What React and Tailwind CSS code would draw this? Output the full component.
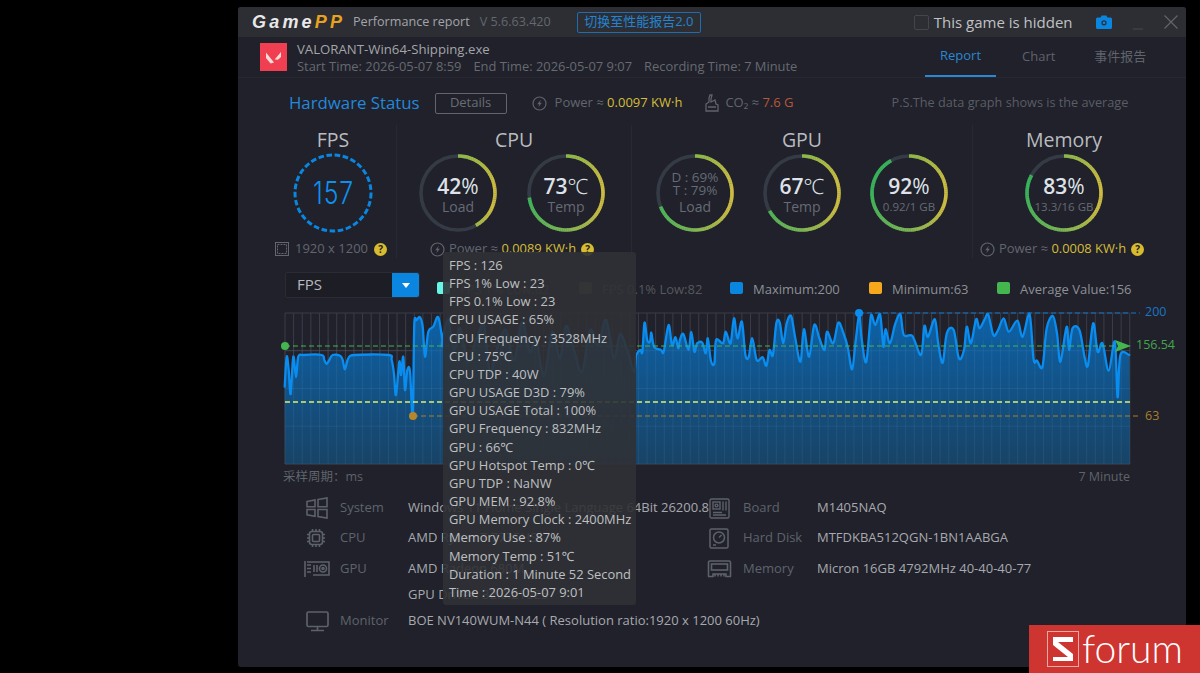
import { Minus } from "lucide-react";

const leftRaw = [
  [44, 380], [50, 290], [56, 330], [62, 402], [70, 290], [78, 352], [85, 290], [100, 285], [155, 285], [163, 300], [170, 312], [178, 300],
  [188, 285], [210, 287], [218, 300], [225, 328], [235, 295], [255, 285], [355, 285], [365, 300], [372, 342], [378, 405], [388, 305],
  [393, 345], [400, 290], [405, 390], [412, 330], [420, 335], [428, 465], [433, 190], [440, 180], [450, 172], [458, 200], [465, 290], [475, 215],
  [490, 200], [505, 172], [518, 250],
];

const midRaw = [
  [442, 343], [448, 320], [454, 350], [460, 328], [468, 362], [476, 340], [484, 325], [490, 372], [498, 345], [506, 330], [514, 360], [522, 322],
  [530, 352], [536, 338], [544, 376], [552, 332], [560, 358], [566, 326], [574, 350], [582, 372], [590, 330], [598, 345], [606, 320], [614, 358],
  [620, 334], [628, 352], [634, 372],
];

const rightRaw = [
  [18, 165], [30, 150], [36, 155], [42, 68], [50, 120], [58, 125], [62, 98], [70, 140], [90, 150], [98, 155], [112, 75], [122, 135], [132, 112],
  [140, 145], [145, 120], [155, 102], [170, 150], [178, 96], [187, 155], [195, 130], [210, 128], [220, 160], [226, 115], [235, 182], [245, 190],
  [250, 120], [270, 130], [278, 95], [292, 130], [302, 55], [312, 115], [325, 65], [335, 165], [345, 170], [355, 115], [368, 180], [385, 172],
  [396, 197], [405, 150], [415, 165], [425, 70], [435, 68], [445, 130], [455, 70], [468, 48], [480, 115], [495, 185], [505, 88], [520, 170],
  [535, 75], [550, 115], [565, 150], [572, 95], [590, 130], [605, 68], [620, 100], [632, 140], [645, 208], [655, 125], [666, 40], [672, 110], [686, 186],
  [700, 45], [712, 75], [726, 42], [736, 140], [742, 88], [755, 130], [770, 72], [785, 42], [795, 105], [820, 108], [845, 165], [855, 78], [865, 110],
  [885, 58], [895, 130], [908, 188], [920, 100], [940, 90], [955, 175], [970, 150], [978, 80], [990, 130], [1005, 58], [1015, 85], [1030, 58], [1040, 42],
  [1055, 105], [1068, 92], [1085, 55], [1100, 95], [1125, 62], [1140, 110], [1160, 40], [1172, 178], [1182, 182], [1198, 200], [1210, 85], [1228, 48],
  [1240, 100], [1250, 185], [1268, 80], [1275, 150], [1285, 85], [1305, 90], [1320, 170], [1330, 195], [1345, 70], [1358, 155], [1372, 130], [1390, 212],
  [1408, 125], [1416, 292], [1424, 165], [1450, 165],
];

const chartPoints = [
  ...leftRaw.map(([x, y]) => [270 + x / 3, 260 + y / 3]),
  ...midRaw,
  ...rightRaw.map(([x, y]) => [630 + x / 2.904, 300 + y / 3]),
];

// catmull-rom so the line has the same soft peaks as the chart lib's smooth mode
function smoothPath(pts) {
  let d = "";
  for (let i = 0; i < pts.length - 1; i++) {
    const p0 = pts[Math.max(i - 1, 0)];
    const p1 = pts[i];
    const p2 = pts[i + 1];
    const p3 = pts[Math.min(i + 2, pts.length - 1)];
    const c1x = p1[0] + (p2[0] - p0[0]) / 6;
    const c1y = Math.max(313, p1[1] + (p2[1] - p0[1]) / 6);
    const c2x = p2[0] - (p3[0] - p1[0]) / 6;
    const c2y = Math.max(313, p2[1] - (p3[1] - p1[1]) / 6);
    d += ` C${c1x.toFixed(1)} ${c1y.toFixed(1)} ${c2x.toFixed(1)} ${c2y.toFixed(1)} ${p2[0].toFixed(1)} ${p2[1].toFixed(1)}`;
  }
  return d;
}

const curve = smoothPath(chartPoints);
const linePath = `M${chartPoints[0][0].toFixed(1)} ${chartPoints[0][1].toFixed(1)}${curve}`;
const areaPath = `M285 464 L${chartPoints[0][0].toFixed(1)} ${chartPoints[0][1].toFixed(1)}${curve} L1130 464 Z`;
const gridX = Array.from({ length: 99 }, (_, i) => 285 + i * 8.62);
const gridY = [313, 350.7, 388.5, 426.2, 464];

const stops = [
  [0, [138, 184, 74]],
  [0.2, [204, 188, 64]],
  [0.32, [204, 188, 64]],
  [0.5, [124, 182, 84]],
  [0.75, [56, 180, 90]],
  [1, [56, 180, 90]],
];

function ringColor(t) {
  for (let i = 1; i < stops.length; i++) {
    if (t <= stops[i][0]) {
      const [a, ca] = stops[i - 1];
      const [b, cb] = stops[i];
      const k = (t - a) / (b - a);
      return `rgb(${ca.map((c, n) => Math.round(c + (cb[n] - c) * k)).join(",")})`;
    }
  }
  return "rgb(56,180,90)";
}

function Ring({ value, children }) {
  const segs = Math.round(value * 1.2);
  const point = (t) => {
    const a = t * 2 * Math.PI - Math.PI / 2;
    return [40 + 37 * Math.cos(a), 40 + 37 * Math.sin(a)];
  };
  return (
    <div className="grid h-[80px] w-[80px] place-items-center">
      <svg className="col-start-1 row-start-1" width="80" height="80" viewBox="0 0 80 80">
        <circle cx="40" cy="40" r="37" fill="none" stroke="#353b45" strokeWidth="3.6" />
        {Array.from({ length: segs }, (_, i) => {
          const t0 = (i / segs) * (value / 100);
          const t1 = ((i + 1.15) / segs) * (value / 100);
          const [x0, y0] = point(t0);
          const [x1, y1] = point(Math.min(t1, value / 100));
          return (
            <line
              key={i}
              x1={x0}
              y1={y0}
              x2={x1}
              y2={y1}
              stroke={ringColor(t0)}
              strokeWidth="3.6"
            />
          );
        })}
      </svg>
      <div className="col-start-1 row-start-1 flex flex-col items-center">{children}</div>
    </div>
  );
}

function BigValue({ num, unit }) {
  return (
    <div className="pt-[6px] text-[21px] leading-[22px] font-semibold text-[#dfe3e9]">
      {num}
      <span className={unit === "%" ? "font-normal" : "font-light"}>{unit}</span>
    </div>
  );
}

function Sub({ children, small }) {
  return <div className={`${small ? "text-[11.5px]" : "text-[14px]"} leading-[20px] text-[#666b75]`}>{children}</div>;
}

function Bolt({ className = "" }) {
  return (
    <svg className={className} width="15" height="15" viewBox="0 0 15 15" fill="none">
      <circle cx="7.5" cy="7.5" r="6.5" stroke="#5f636b" strokeWidth="1.2" />
      <path d="M9 3.6 5.2 8.2h2.2L6.2 11.4 9.9 6.8H7.7z" fill="#5f636b" />
    </svg>
  );
}

function Help() {
  return (
    <span className="flex h-[13px] w-[13px] items-center justify-center rounded-full bg-[#d8bc2e] text-[10px] leading-none font-bold text-[#20212a]">
      ?
    </span>
  );
}

function PowerLine({ value }) {
  return (
    <div className="flex h-[20px] items-center justify-center pr-[4px] text-[13px] whitespace-nowrap text-[#62666f]">
      <Bolt />
      <span className="ml-[4px]">Power ≈&nbsp;</span>
      <span className="text-[12.9px] font-medium text-[#d4bd39]">{value}</span>
      <span className="ml-[5px]">
        <Help />
      </span>
    </div>
  );
}

function SectionTitle({ children }) {
  return <div className="h-[28px] text-center text-[19.5px] leading-[30px] text-[#b9bbbf]">{children}</div>;
}

function LegendItem({ color, label, className, dim }) {
  return (
    <div className={`mt-[6px] flex items-center text-[13px] ${dim ? "text-[#55585f]" : "text-[#8d9096]"} ${className}`}>
      <span className={`h-[12px] w-[13px] rounded-[2px] ${color}`} />
      <span className="mt-[3px] ml-[10px] whitespace-nowrap">{label}</span>
    </div>
  );
}

const iconStroke = "#5d616a";

function WindowsIcon() {
  return (
    <svg width="22" height="22" viewBox="0 0 22 22" fill="none" stroke={iconStroke} strokeWidth="1.6">
      <path d="M1 4.5 9 3v6.8H1zM1 12.5h8v6.8l-8-1.4zM12 2.5l9-1.5v8.8h-9zM12 12.5h9V21l-9-1.5z" />
    </svg>
  );
}

function CpuIcon() {
  return (
    <svg width="20" height="20" viewBox="0 0 20 20" fill="none" stroke={iconStroke} strokeWidth="1.6">
      <rect x="3.5" y="3.5" width="13" height="13" rx="2.5" />
      <rect x="6.5" y="6.5" width="7" height="7" rx="1" />
      <path d="M6.5 1v2M10 1v2M13.5 1v2M6.5 17v2M10 17v2M13.5 17v2M1 6.5h2M1 10h2M1 13.5h2M17 6.5h2M17 10h2M17 13.5h2" />
    </svg>
  );
}

function GpuIcon() {
  return (
    <svg className="-ml-[2px]" width="26" height="18" viewBox="0 0 26 18" fill="none" stroke={iconStroke} strokeWidth="1.6">
      <path d="M3 2h22v13H9" />
      <path d="M1 1v16M3 5h4M3 8.5h4M3 12h4" />
      <circle cx="19" cy="8.5" r="3.5" />
      <circle cx="19" cy="8.5" r="1" />
      <path d="M10 5v7M13 5v7" />
    </svg>
  );
}

function MonitorIcon() {
  return (
    <svg width="23" height="21" viewBox="0 0 23 21" fill="none" stroke={iconStroke} strokeWidth="1.7">
      <rect x="1" y="1" width="21" height="14.5" rx="1.5" />
      <path d="M11.5 15.5V19M5 19.5h13" />
    </svg>
  );
}

function BoardIcon() {
  return (
    <svg width="21" height="21" viewBox="0 0 21 21" fill="none" stroke={iconStroke} strokeWidth="1.4">
      <rect x="1" y="1" width="19" height="19" rx="1.5" />
      <rect x="4" y="4" width="7" height="7" />
      <circle cx="7.5" cy="7.5" r="1.4" />
      <path d="M14 3.5v9M17 3.5v9M4 14.5h9M4 17h13" />
    </svg>
  );
}

function DiskIcon() {
  return (
    <svg width="20" height="21" viewBox="0 0 20 21" fill="none" stroke={iconStroke} strokeWidth="1.5">
      <rect x="1" y="1" width="18" height="19" rx="1.5" />
      <circle cx="10" cy="9.5" r="5.5" />
      <path d="M10 9.5l2.5-2.5M4 17h3" />
    </svg>
  );
}

function MemoryIcon() {
  return (
    <svg className="-ml-[2px]" width="25" height="18" viewBox="0 0 25 18" fill="none" stroke={iconStroke} strokeWidth="1.6">
      <path d="M1.5 16.5V2.5a1.5 1.5 0 0 1 1.5-1.5h19a1.5 1.5 0 0 1 1.5 1.5v14" />
      <rect x="4.5" y="4" width="16" height="6" />
      <path d="M1 16.5h5v-2.5h13v2.5h5M8 14v2.5M11 14v2.5M14 14v2.5M17 14v2.5" />
    </svg>
  );
}

function InfoRow({ icon, label, value, labelW = "w-[68px]", className = "" }) {
  return (
    <div className={`flex items-center text-[13px] whitespace-nowrap ${className}`}>
      <span className="flex w-[34px] shrink-0 justify-start">{icon}</span>
      <span className={`shrink-0 text-[#5f636c] ${labelW}`}>{label}</span>
      <span className="text-[#a7a9ae]">{value}</span>
    </div>
  );
}

const tooltipRows = [
  "FPS : 126",
  "FPS 1% Low : 23",
  "FPS 0.1% Low : 23",
  "CPU USAGE : 65%",
  "CPU Frequency : 3528MHz",
  "CPU : 75℃",
  "CPU TDP : 40W",
  "GPU USAGE D3D : 79%",
  "GPU USAGE Total : 100%",
  "GPU Frequency : 832MHz",
  "GPU : 66℃",
  "GPU Hotspot Temp : 0℃",
  "GPU TDP : NaNW",
  "GPU MEM : 92.8%",
  "GPU Memory Clock : 2400MHz",
  "Memory Use : 87%",
  "Memory Temp : 51℃",
  "Duration : 1 Minute 52 Second",
  "Time : 2026-05-07 9:01",
];

export default function App() {
  return (
    <div
      className="relative h-[673px] w-[1200px] overflow-hidden bg-black pt-[7px] pl-[238px]"
      style={{ fontFamily: '"Open Sans", "Noto Sans", "Noto Sans CJK SC", sans-serif' }}
    >
      <div className="h-[660px] w-[948px] rounded-[3px] bg-[#20212a]">
        {/* title bar */}
        <div className="flex h-[30px] items-center rounded-t-[3px] bg-[#2c2e34] pl-[14px]">
          <div
            className="w-[89px] text-[18px] font-bold tracking-[3.2px] whitespace-nowrap text-[#e8e8e8] italic"
            style={{ fontFamily: '"Liberation Sans", sans-serif' }}
          >
            Game<span className="text-[#e9a21f]">PP</span>
          </div>
          <span className="ml-[12px] text-[12.6px] text-[#a3a5a9]">Performance report</span>
          <span className="ml-[10px] text-[12.6px] text-[#64676d]">V 5.6.63.420</span>
          <div className="ml-[26px] flex h-[21px] w-[124px] items-center justify-center rounded-[2px] border border-[#1f6db0] text-[13px] text-[#2583cf]">
            切换至性能报告2.0
          </div>
          <span className="ml-[213px] h-[15px] w-[15px] rounded-[2px] border border-[#44464c]" />
          <span className="ml-[5px] text-[15px] text-[#c0c1c4]">This game is hidden</span>
          <svg className="ml-[23px]" width="16" height="14" viewBox="0 0 16 14">
            <path d="M1.5 2.5H4.6L5.6 0.6h4.8l1 1.9h3.1a1.5 1.5 0 0 1 1.5 1.5v8.4a1.5 1.5 0 0 1-1.5 1.5h-13A1.5 1.5 0 0 1 0 12.4V4a1.5 1.5 0 0 1 1.5-1.5z" fill="#0a86e0" />
            <circle cx="8" cy="7.8" r="2.6" fill="#2c2e34" />
            <circle cx="8" cy="7.8" r="1.4" fill="#0a86e0" />
          </svg>
          <Minus className="mt-[14px] ml-[18px] text-[#55585e]" size={16} strokeWidth={1} />
          <svg className="ml-[18px]" width="14" height="14" viewBox="0 0 14 14" stroke="#63666c" strokeWidth="1.1">
            <path d="M0.5 0.5 13.5 13.5M13.5 0.5 0.5 13.5" />
          </svg>
        </div>

        {/* game header + tabs */}
        <div className="flex h-[41px] items-stretch border-b border-[#26272f] pl-[22px]">
          <div className="mt-[6px] flex h-[28px] w-[27px] items-center justify-center bg-[#ef3f50]">
            <svg width="15" height="13" viewBox="0 0 15 13">
              <path d="M0 1.5 8 11.5 4.6 12.5 0 7z" fill="#f6dcd8" />
              <path d="M15 1 8.6 8.4l3.4.3L15 6z" fill="#f6dcd8" />
            </svg>
          </div>
          <div className="ml-[10px] flex w-[501px] shrink-0 flex-col pt-[3px]">
            <div className="text-[13.2px] leading-[18px] text-[#a3a5a9]">VALORANT-Win64-Shipping.exe</div>
            <div className="-mt-[1px] flex text-[12.9px] leading-[18px] whitespace-nowrap text-[#666a71]">
              <span>Start Time: 2026-05-07 8:59</span>
              <span className="ml-[12px]">End Time: 2026-05-07 9:07</span>
              <span className="ml-[12px]">Recording Time: 7 Minute</span>
            </div>
          </div>
          <div className="ml-[127px] flex h-full text-[13px]">
            <div className="flex w-[71px] items-center justify-center border-b-2 border-[#2b86d3] text-[#2b86d3]">Report</div>
            <div className="ml-[26px] flex items-center text-[#5f636b]">Chart</div>
            <div className="ml-[39px] flex items-center text-[#5f636b]">事件报告</div>
          </div>
        </div>

        {/* hardware status */}
        <div className="flex h-[47px] items-center pt-[3px] pl-[51px]">
          <span className="text-[16.8px] text-[#2389dc]">Hardware Status</span>
          <span className="ml-[15px] flex h-[21px] w-[72px] items-center justify-center rounded-[2px] border border-[#62656c] text-[13px] text-[#6a6d74]">
            Details
          </span>
          <Bolt className="ml-[25px]" />
          <span className="ml-[8px] text-[13px] text-[#62666f]">Power ≈&nbsp;</span>
          <span className="text-[13px] font-medium text-[#d4bd39]">0.0097 KW·h</span>
          <svg className="ml-[23px]" width="14" height="18" viewBox="0 0 14 18" fill="none" stroke="#5f636b" strokeWidth="1.3">
            <path d="M1 17V10l3-2V4l1-3h2L6 5v3l4-2 1 4 2 1v6zM3 13h8" />
          </svg>
          <span className="ml-[6px] text-[13px] text-[#62666f]">CO₂ ≈&nbsp;</span>
          <span className="text-[13px] font-medium text-[#b8583a]">7.6 G</span>
          <span className="ml-[98px] text-[12.7px] whitespace-nowrap text-[#5a5d65]">P.S.The data graph shows is the average</span>
        </div>

        {/* stat groups */}
        <div className="ml-[32px] flex h-[133px]">
          <div className="w-[126px]">
            <SectionTitle>FPS</SectionTitle>
            <div className="flex justify-center">
              <div className="grid h-[80px] w-[80px] place-items-center">
                <svg className="col-start-1 row-start-1" width="80" height="80" viewBox="0 0 80 80">
                  <circle cx="40" cy="40" r="38" fill="none" stroke="#0a86e0" strokeWidth="3" strokeDasharray="5.6 2.6" />
                </svg>
                <span
                  className="col-start-1 row-start-1 scale-x-[0.8] text-[31px] font-light tracking-[1px] text-[#0f8fee]"
                  style={{ fontFamily: '"Inter", sans-serif' }}
                >
                  157
                </span>
              </div>
            </div>
            <div className="mt-[6px] flex h-[20px] items-center justify-center pr-[4px] text-[13px] text-[#62666f]">
              <svg width="14" height="14" viewBox="0 0 14 14" fill="none" stroke="#62666f">
                <rect x="0.5" y="0.5" width="13" height="13" />
                <rect x="2.5" y="2.5" width="9" height="9" strokeDasharray="2 1" />
              </svg>
              <span className="mx-[6px]">1920 x 1200</span>
              <Help />
            </div>
          </div>

          <div className="w-[235px] border-l border-[#282932]">
            <SectionTitle>CPU</SectionTitle>
            <div className="flex gap-[28px] pl-[21px]">
              <Ring value={42}>
                <BigValue num="42" unit="%" />
                <Sub>Load</Sub>
              </Ring>
              <Ring value={73}>
                <BigValue num="73" unit="℃" />
                <Sub>Temp</Sub>
              </Ring>
            </div>
            <div className="mt-[6px]">
              <PowerLine value="0.0089 KW·h" />
            </div>
          </div>

          <div className="w-[341px] border-l border-[#282932]">
            <SectionTitle>GPU</SectionTitle>
            <div className="flex gap-[27px] pl-[23px]">
              <Ring value={69}>
                <div className="pt-[2px] text-[13.5px] leading-[13px] text-[#666b75]">D : 69%</div>
                <div className="text-[13.5px] leading-[13px] text-[#666b75]">T : 79%</div>
                <Sub>Load</Sub>
              </Ring>
              <Ring value={67}>
                <BigValue num="67" unit="℃" />
                <Sub>Temp</Sub>
              </Ring>
              <Ring value={92}>
                <BigValue num="92" unit="%" />
                <Sub small>0.92/1 GB</Sub>
              </Ring>
            </div>
          </div>

          <div className="w-[183px] border-l border-[#282932]">
            <SectionTitle>Memory</SectionTitle>
            <div className="flex justify-center">
              <Ring value={83}>
                <BigValue num="83" unit="%" />
                <Sub small>13.3/16 GB</Sub>
              </Ring>
            </div>
            <div className="mt-[6px]">
              <PowerLine value="0.0008 KW·h" />
            </div>
          </div>
        </div>

        {/* selector + legend */}
        <div className="mt-[14px] flex h-[26px] items-center pl-[47px]">
          <div className="flex h-[26px] w-[135px] items-stretch rounded-[2px] border border-[#2a2b33] bg-[#1d1e25]">
            <span className="flex-1 pl-[11px] text-[15px] leading-[23px] text-[#b7b9bc]">FPS</span>
            <span className="flex w-[27px] items-center justify-center rounded-r-[2px] bg-[#0a86e0]">
              <span className="h-0 w-0 border-x-[4px] border-t-[5px] border-x-transparent border-t-white" />
            </span>
          </div>
          <LegendItem className="ml-[17px] w-[142px]" color="bg-[#66f5e6]" label="FPS 1% Low:82" dim />
          <LegendItem className="w-[151px]" color="bg-[#54533a]" label="FPS 0.1% Low:82" dim />
          <LegendItem className="w-[139px]" color="bg-[#0a86e0]" label="Maximum:200" />
          <LegendItem className="w-[128px]" color="bg-[#f5a81c]" label="Minimum:63" />
          <LegendItem color="bg-[#45b550]" label="Average Value:156" />
        </div>

        {/* chart */}
        <svg className="mt-[7px] block" width="948" height="165" viewBox="238 305 948 165">
          <defs>
            <linearGradient id="area" x1="0" y1="0" x2="0" y2="1">
              <stop offset="0" stopColor="#0b67b2" />
              <stop offset="1" stopColor="#17466b" />
            </linearGradient>
          </defs>
          {gridX.map((x) => (
            <line key={x} x1={x} y1="313" x2={x} y2="464" stroke="#3a3d48" strokeWidth="1" />
          ))}
          {gridY.map((y) => (
            <line key={y} x1="285" y1={y} x2="1130" y2={y} stroke="#3a3d48" strokeWidth="1" />
          ))}
          <path d={areaPath} fill="url(#area)" fillOpacity="0.92" />
          {gridX.map((x) => (
            <line key={`o${x}`} x1={x} y1="340" x2={x} y2="464" stroke="#ffffff" strokeOpacity="0.05" strokeWidth="1" />
          ))}
          {gridY.slice(1).map((y) => (
            <line key={`h${y}`} x1="285" y1={y} x2="1130" y2={y} stroke="#ffffff" strokeOpacity="0.05" strokeWidth="1" />
          ))}
          <path d={linePath} fill="none" stroke="#0a8df0" strokeWidth="2.3" strokeLinejoin="round" strokeLinecap="round" />
          <line x1="285" y1="346" x2="1116" y2="346" stroke="#45b550" strokeWidth="1" strokeDasharray="5 3" />
          <line x1="285" y1="402" x2="1130" y2="402" stroke="#dff06a" strokeWidth="1.4" strokeDasharray="5 3" />
          <line x1="413" y1="416" x2="1140" y2="416" stroke="#a97f2c" strokeWidth="1" strokeDasharray="5 3" />
          <line x1="859" y1="313" x2="1140" y2="313" stroke="#0a78cf" strokeWidth="1" strokeDasharray="5 3" />
          <circle cx="285" cy="346" r="4" fill="#45b550" />
          <circle cx="413" cy="416" r="4" fill="#b5862b" />
          <circle cx="859" cy="313" r="4" fill="#0a8df0" />
          <path d="M1115 340 1131 346 1115 352 1118 346z" fill="#45b550" />
          <text x="1145" y="316" fontSize="12.5" fill="#1a76c4">200</text>
          <text x="1136" y="349" fontSize="12.5" fill="#45a450">156.54</text>
          <text x="1145" y="420" fontSize="12.5" fill="#a97f2c">63</text>
        </svg>

        <div className="flex h-[15px] w-[892px] items-center justify-between pl-[45px] text-[12.5px] text-[#5f636b]">
          <span>采样周期：ms</span>
          <span>7 Minute</span>
        </div>

        {/* system info */}
        <div className="mt-[12px] grid h-[140px] w-[948px] grid-cols-[403px_1fr] pl-[68px]">
          <div className="flex flex-col">
            <InfoRow className="h-[22px]" icon={<WindowsIcon />} label="System" value="Windows 11 Home Single Language 64Bit 26200.8" />
            <InfoRow className="mt-[8px] h-[22px]" icon={<CpuIcon />} label="CPU" value="AMD Ryzen 7 7735HS" />
            <InfoRow className="mt-[9px] h-[22px]" icon={<GpuIcon />} label="GPU" value="AMD Radeon 680M" />
            <div className="mt-[3px] h-[22px] pl-[102px] text-[13px] leading-[22px] text-[#a7a9ae]">GPU Driver: 32.0.21025</div>
            <InfoRow className="mt-[5px] h-[22px]" icon={<MonitorIcon />} label="Monitor" value="BOE NV140WUM-N44 ( Resolution ratio:1920 x 1200 60Hz)" />
          </div>
          <div className="flex flex-col">
            <InfoRow className="h-[22px]" labelW="w-[74px]" icon={<BoardIcon />} label="Board" value="M1405NAQ" />
            <InfoRow className="mt-[8px] h-[22px]" labelW="w-[74px]" icon={<DiskIcon />} label="Hard Disk" value="MTFDKBA512QGN-1BN1AABGA" />
            <InfoRow className="mt-[9px] h-[22px]" labelW="w-[74px]" icon={<MemoryIcon />} label="Memory" value="Micron 16GB 4792MHz 40-40-40-77" />
          </div>
        </div>
      </div>

      {/* hover tooltip */}
      <div className="absolute top-[252px] left-[443px] h-[353px] w-[193px] rounded-[3px] bg-[#303135]/90 px-[6px] pt-[4px] text-[12.9px] leading-[18.16px] whitespace-nowrap text-[#bfc0c3]">
        {tooltipRows.map((row) => (
          <div key={row}>{row}</div>
        ))}
      </div>

      {/* watermark */}
      <div className="absolute top-[625px] left-[1029px] flex h-[48px] w-[171px] items-center bg-[#ce3530] pl-[18px]">
        <svg width="32" height="36" viewBox="0 0 32 36" fill="none">
          <rect x="0.5" y="0.5" width="31" height="35" stroke="#e9a9a6" />
          <path d="M6 6h20v5H11l15 12v7H6v-4h15L6 14z" fill="#ffffff" />
        </svg>
        <span className="-mt-[2px] ml-[3px] text-[39px] leading-[44px] font-light text-white" style={{ fontFamily: '"Lato", sans-serif' }}>
          forum
        </span>
      </div>
    </div>
  );
}
